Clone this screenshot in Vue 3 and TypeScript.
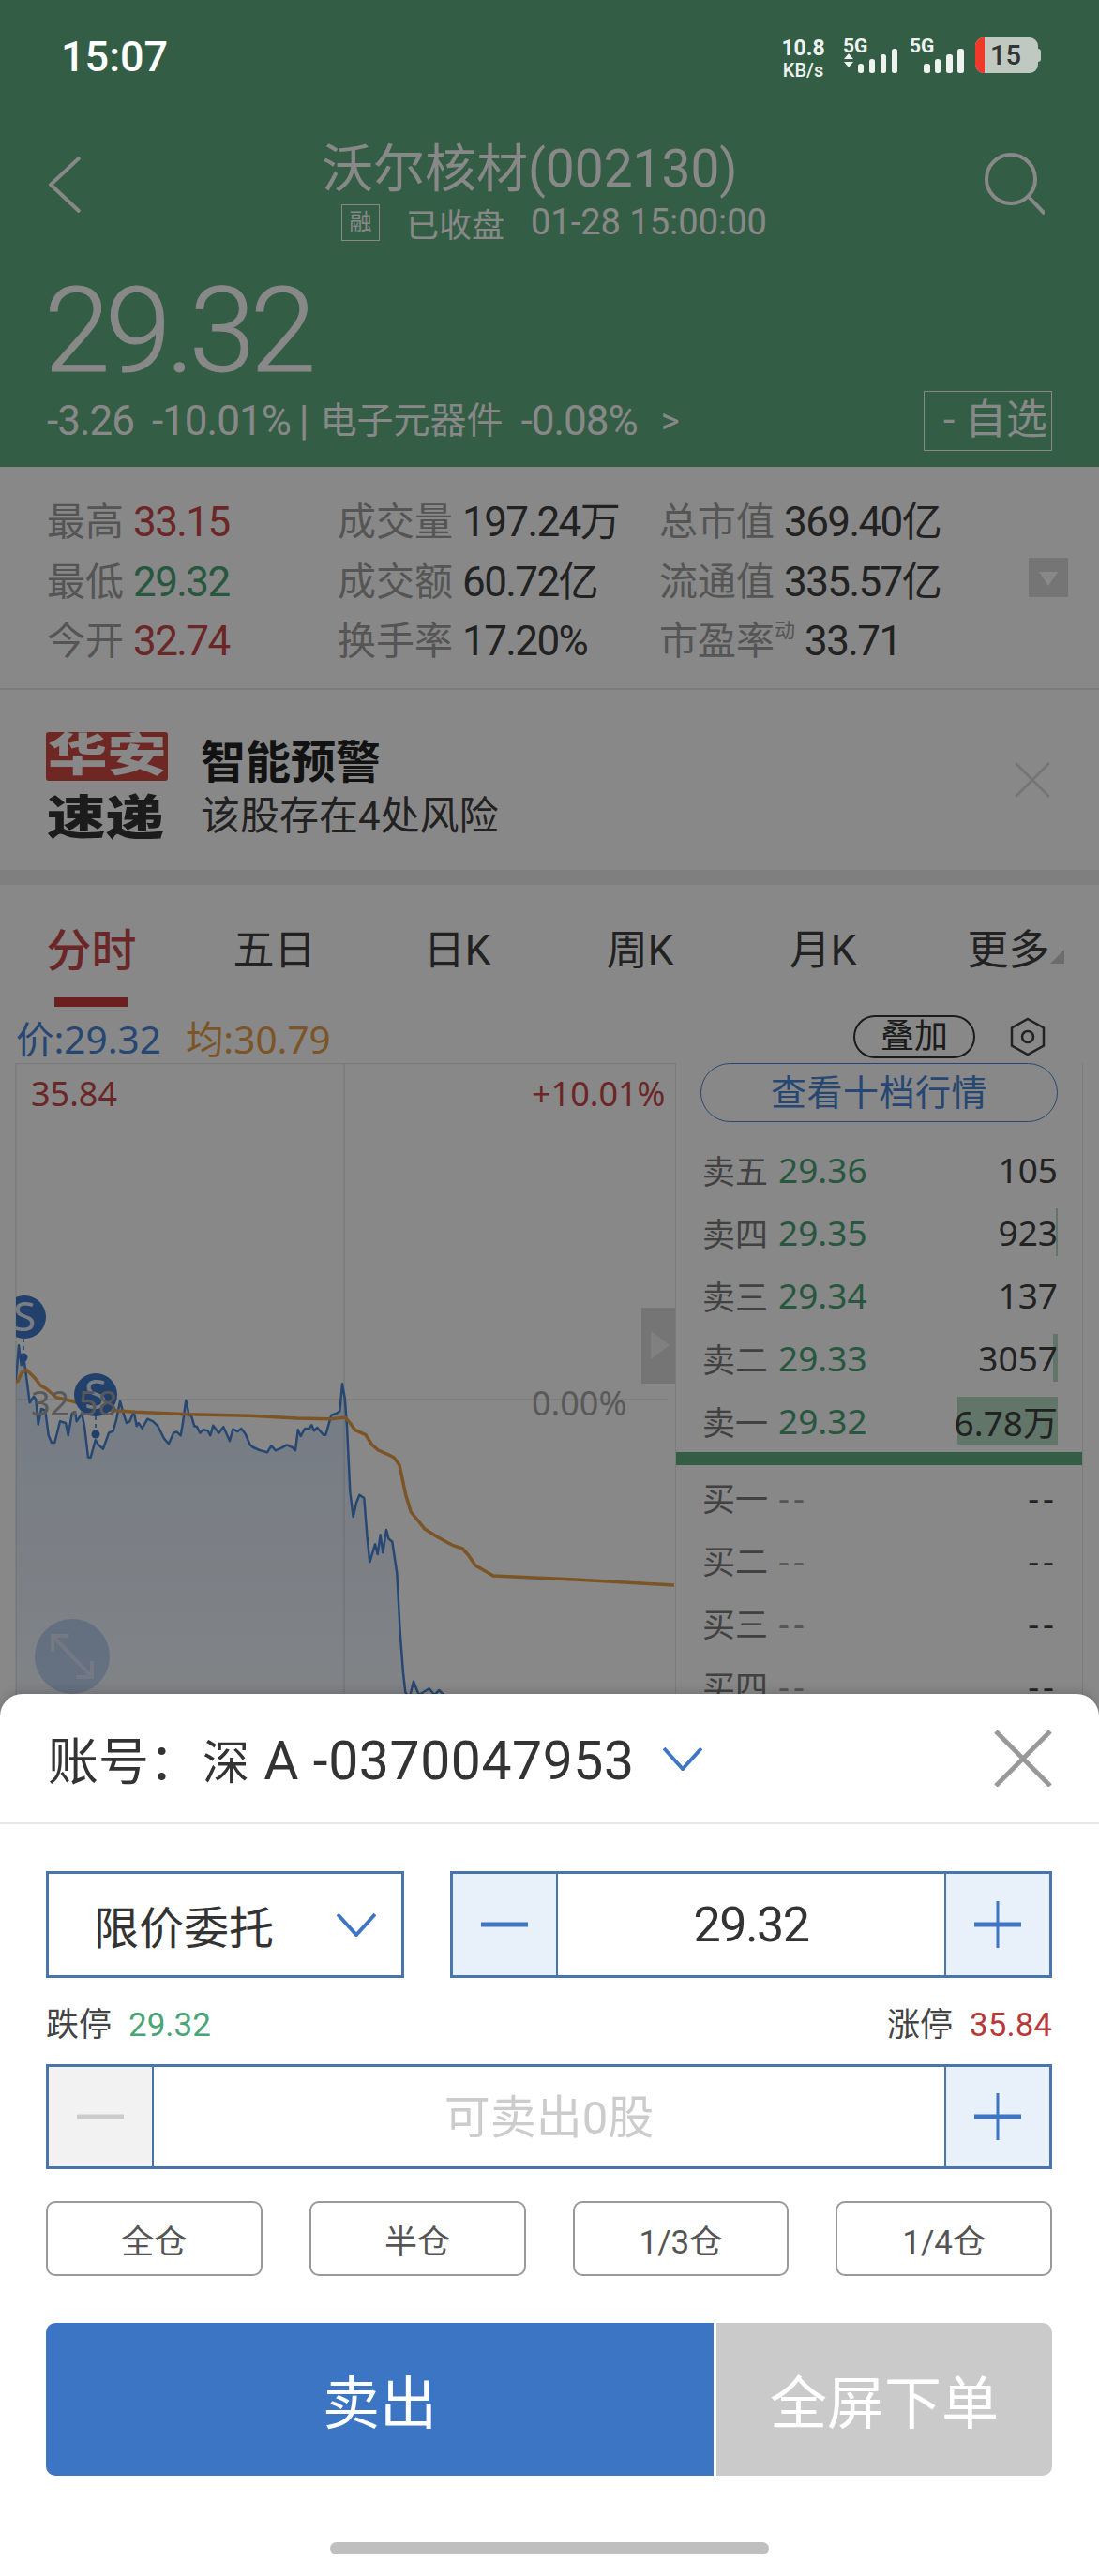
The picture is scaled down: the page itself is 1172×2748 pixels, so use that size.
<script setup lang="ts">
type Pt = [number, number]

// 行情摘要
const quotes = [
  [
    { label: '最高', value: '33.15', tone: 'up' },
    { label: '成交量', value: '197.24', unit: '万', tone: '' },
    { label: '总市值', value: '369.40', unit: '亿', tone: '' }
  ],
  [
    { label: '最低', value: '29.32', tone: 'down' },
    { label: '成交额', value: '60.72', unit: '亿', tone: '' },
    { label: '流通值', value: '335.57', unit: '亿', tone: '' }
  ],
  [
    { label: '今开', value: '32.74', tone: 'up' },
    { label: '换手率', value: '17.20%', tone: '' },
    { label: '市盈率', sup: '动', value: '33.71', tone: '' }
  ]
].flat()

const tabs = ['分时', '五日', '日K', '周K', '月K', '更多']

const asks = [
  { label: '卖五', price: '29.36', qty: '105', depth: 0 },
  { label: '卖四', price: '29.35', qty: '923', depth: 2 },
  { label: '卖三', price: '29.34', qty: '137', depth: 0 },
  { label: '卖二', price: '29.33', qty: '3057', depth: 5 },
  { label: '卖一', price: '29.32', qty: '6.78万', depth: 107 }
]
const bids = ['买一', '买二', '买三', '买四']
const positions = ['全仓', '半仓', '1/3仓', '1/4仓']

// 走势点，按 3 倍放大后的坐标记录
const bluePts: Pt[] = [
  [50, 290], [60, 172], [68, 235], [76, 210], [84, 270], [95, 355], [108, 335], [115, 345], [122, 425], [132, 375],
  [145, 380], [155, 460], [165, 483], [175, 483], [192, 415], [210, 420], [218, 460], [230, 390], [240, 385], [245, 415],
  [262, 390], [270, 430], [282, 530], [290, 530], [305, 475], [315, 490], [330, 503], [348, 452], [362, 445], [372, 410],
  [384, 350], [395, 390], [405, 420], [415, 415], [428, 383], [437, 430], [443, 420], [455, 437], [472, 407], [490, 415],
  [505, 430], [525, 470], [540, 487], [555, 452], [565, 448], [578, 460], [585, 420], [595, 347], [605, 395], [612, 397],
  [622, 430], [630, 432], [640, 452], [650, 442], [665, 445], [673, 460], [682, 428], [700, 452], [715, 433], [725, 455],
  [735, 478], [745, 440], [760, 447], [772, 438], [785, 455], [800, 490], [810, 498], [830, 507], [855, 514], [868, 493],
  [882, 508], [900, 500], [918, 490], [935, 498], [945, 508], [953, 442], [962, 462], [975, 438], [990, 437], [997, 427],
  [1005, 445], [1015, 435], [1035, 458], [1042, 458], [1060, 395], [1075, 390], [1087, 383], [1095, 295], [1103, 340], [1110, 430],
  [1120, 640], [1130, 720], [1140, 675], [1150, 650], [1165, 660], [1175, 790], [1183, 865], [1200, 808], [1208, 840], [1217, 778],
  [1225, 835], [1236, 762], [1243, 790], [1255, 800], [1270, 900], [1280, 1090], [1290, 1220], [1297, 1282], [1310, 1300],
  [1323, 1247], [1340, 1290], [1373, 1270], [1390, 1290], [1405, 1275], [1420, 1290]
]
const avgPts: Pt[] = [
  [50, 290], [58, 285], [70, 258], [85, 250], [110, 275], [130, 300], [150, 312], [180, 338], [230, 350], [300, 375],
  [430, 385], [600, 392], [800, 397], [950, 405], [1060, 407], [1105, 402], [1120, 420], [1135, 442], [1170, 458], [1190, 490],
  [1210, 507], [1240, 520], [1260, 530], [1278, 555], [1298, 650], [1315, 705], [1360, 760], [1400, 785], [1450, 812], [1480, 822],
  [1500, 845], [1521, 876], [1578, 909], [1839, 921], [2157, 939]
]

const toPath = (pts: Pt[]) =>
  pts.map(([x, y], i) => `${i ? 'L' : 'M'}${(x / 3).toFixed(1)} ${(1380 + y / 3 - 1136).toFixed(1)}`).join(' ')

const bluePath = toPath(bluePts)
const avgPath = toPath(avgPts)
const areaPath = `${bluePath} L473 700 L17 700 Z`
</script>

<template>
  <div class="page">
    <header class="header">
      <div class="status">
        <span class="time">15:07</span>
        <div class="status-right">
          <div class="speed"><b>10.8</b><span>KB/s</span></div>
          <div class="sim">
            <span class="g">5G</span>
            <svg width="58" height="26" viewBox="0 0 58 26">
              <path d="M1 11 6 5 11 11ZM1 14 6 20 11 14Z" fill="#eef3ef" />
              <rect x="16" y="16" width="6" height="10" rx="2.5" fill="#eef3ef" />
              <rect x="28" y="11" width="6" height="15" rx="2.5" fill="#eef3ef" />
              <rect x="40" y="6" width="6" height="20" rx="2.5" fill="#eef3ef" />
              <rect x="52" y="0" width="6" height="26" rx="2.5" fill="#eef3ef" />
            </svg>
          </div>
          <div class="sim second">
            <span class="g">5G</span>
            <svg width="43" height="26" viewBox="0 0 43 26">
              <rect x="0" y="16" width="7" height="10" rx="2.5" fill="#eef3ef" />
              <rect x="12" y="11" width="6" height="15" rx="2.5" fill="#eef3ef" />
              <rect x="24" y="6" width="7" height="20" rx="2.5" fill="#eef3ef" />
              <rect x="36" y="0" width="7" height="26" rx="2.5" fill="#eef3ef" />
            </svg>
          </div>
          <div class="battery"><i></i><span>15</span></div>
        </div>
      </div>

      <div class="nav">
        <svg class="back" width="34" height="60" viewBox="0 0 34 60">
          <path d="M33 1 2 30 33 59" fill="none" stroke="#fff" stroke-width="4" />
        </svg>
        <div class="nav-title">
          <div class="title">沃尔核材(002130)</div>
          <div class="sub">
            <span class="rong">融</span>
            <span class="closed">已收盘</span>
            <span>01-28 15:00:00</span>
          </div>
        </div>
        <svg class="search" width="64" height="66" viewBox="0 0 64 66">
          <circle cx="28" cy="28" r="26" fill="none" stroke="#fff" stroke-width="4" />
          <path d="M47 47 64 65" stroke="#fff" stroke-width="4" />
        </svg>
      </div>

      <div class="price">29.32</div>
      <div class="change">
        <div class="change-text">
          <span class="num">-3.26</span>
          <span class="num">-10.01%</span>
          <span class="bar">|</span>
          <span class="sector">电子元器件</span>
          <span class="num">-0.08%</span>
          <span class="gt">&gt;</span>
        </div>
        <div class="fav">- 自选</div>
      </div>
    </header>

    <section class="quote">
      <div class="quote-grid">
        <div v-for="q in quotes" :key="q.label" class="quote-item">
          <span class="q-label">{{ q.label }}<sup v-if="q.sup">{{ q.sup }}</sup></span>
          <span class="q-value" :class="q.tone">{{ q.value }}<small v-if="q.unit">{{ q.unit }}</small></span>
        </div>
      </div>
      <div class="expand"></div>
    </section>

    <section class="alert">
      <div class="logo">
        <div class="logo-top"><span>华安</span></div>
        <div class="logo-bottom"><span>速递</span></div>
      </div>
      <div class="alert-text">
        <div class="alert-title">智能预警</div>
        <div class="alert-desc">该股存在4处风险</div>
      </div>
      <svg class="alert-close" width="38" height="38" viewBox="0 0 38 38">
        <path d="M1 1 37 37M37 1 1 37" stroke="#dcdcdc" stroke-width="2.5" />
      </svg>
    </section>

    <nav class="tabs">
      <div v-for="(t, i) in tabs" :key="t" class="tab" :class="{ active: i === 0, more: i === 5 }">{{ t }}</div>
    </nav>

    <div class="legend">
      <span class="l-price">价:29.32</span>
      <span class="l-avg">均:30.79</span>
      <span class="overlay-btn">叠加</span>
      <svg class="hex" width="38" height="42" viewBox="0 0 38 42">
        <path d="M19 2 36 11.500V30.500L19 40 2 30.500V11.500Z" fill="none" stroke="#404040" stroke-width="2.500" />
        <circle cx="19" cy="21" r="6" fill="none" stroke="#404040" stroke-width="2.500" />
      </svg>
    </div>

    <section class="market">
      <div class="chart">
        <svg class="chart-svg" width="720" height="700" viewBox="0 0 720 700">
          <defs>
            <linearGradient id="area" x1="0" y1="0" x2="0" y2="1">
              <stop offset="0" stop-color="#4a86d8" stop-opacity=".2" />
              <stop offset="1" stop-color="#4a86d8" stop-opacity=".07" />
            </linearGradient>
            <clipPath id="plot"><rect x="17" y="0" width="703" height="700" /></clipPath>
          </defs>
          <path d="M17 0V700M367 0V700M17 .5H720M17 359H712" stroke="#e6e6e6" stroke-width="1.500" fill="none" />
          <g clip-path="url(#plot)">
            <path :d="areaPath" fill="url(#area)" />
            <path :d="bluePath" fill="none" stroke="#4a86d8" stroke-width="2.500" stroke-linejoin="round" />
            <path :d="avgPath" fill="none" stroke="#e8a04a" stroke-width="3.500" stroke-linejoin="round" />
            <circle cx="26" cy="271" r="23" fill="#3f78c8" />
            <text x="26" y="286" class="s-mark">S</text>
            <path d="M25 294V310M102 377V392" stroke="#3f78c8" stroke-width="1.500" stroke-dasharray="4 4" />
            <circle cx="25" cy="314" r="4.500" fill="#3f78c8" />
            <circle cx="102" cy="354" r="23" fill="#3f78c8" />
            <text x="102" y="369" class="s-mark">S</text>
            <circle cx="102" cy="396" r="4.500" fill="#3f78c8" />
          </g>
          <circle cx="77" cy="633" r="40" fill="#4a86d8" fill-opacity=".3" />
          <path d="M56 628V611H73M56 611 98 655M98 638V655H81" fill="none" stroke="#fff" stroke-opacity=".4" stroke-width="4" />
        </svg>
        <span class="axis up axis-tl">35.84</span>
        <span class="axis up axis-tr">+10.01%</span>
        <span class="axis mid axis-ml">32.58</span>
        <span class="axis mid axis-mr">0.00%</span>
        <div class="handle"><i></i></div>
      </div>

      <div class="book">
        <div class="ten">查看十档行情</div>
        <div v-for="a in asks" :key="a.label" class="row">
          <span class="r-label">{{ a.label }}</span>
          <span class="r-price">{{ a.price }}</span>
          <span class="r-qty">
            <i v-if="a.depth" class="depth" :style="{ width: a.depth + 'px' }"></i>
            <em>{{ a.qty }}</em>
          </span>
        </div>
        <div class="book-split"></div>
        <div v-for="b in bids" :key="b" class="row">
          <span class="r-label">{{ b }}</span>
          <span class="r-price none">--</span>
          <span class="r-qty none"><em>--</em></span>
        </div>
      </div>
    </section>

    <div class="dim"></div>

    <section class="sheet">
      <div class="account">
        <span class="acc-label">账号：</span>
        <span class="acc-value"><span class="shen">深</span> A -0370047953</span>
        <svg class="acc-chev" width="42" height="26" viewBox="0 0 42 26">
          <path d="M1 2 21 24 41 2" fill="none" stroke="#3f76c4" stroke-width="4" />
        </svg>
        <svg class="acc-close" width="62" height="60" viewBox="0 0 62 60">
          <path d="M2 1 60 59M60 1 2 59" stroke="#999" stroke-width="5" />
        </svg>
      </div>

      <div class="form">
        <div class="form-row">
          <div class="select">
            <span>限价委托</span>
            <svg width="42" height="26" viewBox="0 0 42 26">
              <path d="M1 2 21 24 41 2" fill="none" stroke="#3f76c4" stroke-width="4" />
            </svg>
          </div>
          <div class="stepper price-step">
            <div class="step">
              <svg width="50" height="50" viewBox="0 0 50 50"><path d="M0 25H50" stroke="#3f76c4" stroke-width="5" /></svg>
            </div>
            <div class="step-value price-value">29.32</div>
            <div class="step">
              <svg width="50" height="50" viewBox="0 0 50 50"><path d="M0 25H50" stroke="#3f76c4" stroke-width="5" /><path d="M25 0V50" stroke="#3f76c4" stroke-width="3" /></svg>
            </div>
          </div>
        </div>

        <div class="limits">
          <span>跌停<b class="l-down">29.32</b></span>
          <span>涨停<b class="l-up">35.84</b></span>
        </div>

        <div class="stepper">
          <div class="step off">
            <svg width="50" height="50" viewBox="0 0 50 50"><path d="M0 25H50" stroke="#ccc" stroke-width="5" /></svg>
          </div>
          <div class="step-value placeholder">可卖出0股</div>
          <div class="step">
            <svg width="50" height="50" viewBox="0 0 50 50"><path d="M0 25H50" stroke="#3f76c4" stroke-width="5" /><path d="M25 0V50" stroke="#3f76c4" stroke-width="3" /></svg>
          </div>
        </div>

        <div class="positions">
          <button v-for="p in positions" :key="p" class="pos">{{ p }}</button>
        </div>

        <div class="actions">
          <button class="sell">卖出</button>
          <button class="full">全屏下单</button>
        </div>
      </div>

      <div class="home"></div>
    </section>
  </div>
</template>

<style>
html,
body {
  margin: 0;
  background: #fff;
}
</style>

<style scoped>
.page {
  position: relative;
  width: 1172px;
  height: 2748px;
  overflow: hidden;
  background: #fff;
  color: #404040;
  font-family: Roboto, "Noto Sans CJK SC", sans-serif;
}

.dim {
  position: absolute;
  inset: 0;
  z-index: 1;
  background: rgba(0, 0, 0, 0.467);
}

/* header */
.header {
  height: 498px;
  background: #60b081;
  color: #fff;
}
.status {
  position: relative;
  z-index: 2;
  height: 122px;
  display: flex;
  justify-content: space-between;
  padding: 0 65px;
  box-sizing: border-box;
}
.time {
  font-size: 45px;
  font-weight: 500;
  line-height: 122px;
  color: #fff;
}
.status-right {
  display: flex;
  align-items: flex-start;
  padding-top: 40px;
  color: #eef3ef;
}
.speed {
  width: 45px;
  display: flex;
  flex-direction: column;
  align-items: center;
  line-height: 1;
}
.speed b {
  font-size: 23px;
  font-weight: 700;
  height: 25px;
}
.speed span {
  font-size: 20px;
  font-weight: 500;
}
.sim {
  position: relative;
  margin-left: 20px;
  width: 58px;
  height: 38px;
}
.sim .g {
  position: absolute;
  left: 0;
  top: -1px;
  font-size: 21px;
  font-weight: 700;
  line-height: 20px;
}
.sim svg {
  position: absolute;
  left: 0;
  bottom: 0;
}
.sim.second {
  margin-left: 13px;
}
.sim.second svg {
  left: 15px;
}
.battery {
  position: relative;
  margin-left: 12px;
  width: 67px;
  height: 38px;
  border-radius: 9px;
  background: #bfc9c2;
  display: flex;
  align-items: center;
}
.battery::after {
  content: "";
  position: absolute;
  right: -3px;
  top: 12px;
  width: 3px;
  height: 14px;
  border-radius: 0 3px 3px 0;
  background: #bfc9c2;
}
.battery i {
  width: 10px;
  height: 100%;
  border-radius: 9px 0 0 9px;
  background: #f0392b;
}
.battery span {
  margin-left: 6px;
  font-size: 29px;
  font-weight: 500;
  color: #333;
}

.nav {
  display: flex;
  align-items: flex-start;
  height: 156px;
  padding: 25px 58px 0 52px;
  box-sizing: border-box;
}
.back {
  margin-top: 20px;
  flex: none;
}
.search {
  margin-top: 16px;
  flex: none;
}
.nav-title {
  flex: 1;
}
.title {
  margin-left: 257px;
  font-size: 55px;
  line-height: 66px;
  white-space: nowrap;
}
.sub {
  margin-left: 278px;
  height: 48px;
  display: flex;
  align-items: center;
  font-size: 38px;
  white-space: nowrap;
}
.rong {
  width: 41px;
  height: 39px;
  box-sizing: border-box;
  border: 1px solid #fff;
  font-size: 24px;
  line-height: 37px;
  text-align: center;
  margin-right: 28px;
}
.closed {
  margin-right: 28px;
  font-size: 35px;
}

.price {
  margin-top: 10px;
  padding-left: 47px;
  height: 129px;
  font-size: 127px;
  font-weight: 300;
  line-height: 129px;
  letter-spacing: -5.5px;
  -webkit-text-stroke: 1px #fff;
}
.change {
  display: flex;
  align-items: center;
  justify-content: space-between;
  padding: 0 50px;
  height: 64px;
}
.change-text {
  display: flex;
  align-items: center;
  height: 64px;
  line-height: 64px;
  font-size: 39px;
  white-space: nowrap;
}
.change-text .num {
  font-size: 44px;
  letter-spacing: -1px;
  margin-right: 19px;
}
.change-text .bar {
  margin: 0 12px 0 -10px;
  font-size: 44px;
}
.change-text .sector {
  margin-right: 19px;
}
.change-text .gt {
  margin-left: 6px;
  font-size: 38px;
}
.fav {
  width: 137px;
  height: 64px;
  box-sizing: border-box;
  border: 1px solid #fff;
  font-size: 44px;
  line-height: 60px;
  text-align: right;
  padding-right: 4px;
  white-space: nowrap;
}

/* quote */
.quote {
  display: flex;
  height: 238px;
  box-sizing: border-box;
  border-bottom: 2px solid #e6e6e6;
}
.quote-grid {
  display: grid;
  grid-template-columns: 310px 343px 394px;
  grid-auto-rows: 63.500px;
  width: 1047px;
  padding: 28px 0 0 50px;
  flex: none;
  margin-right: -50px;
}
.quote-item {
  display: flex;
  align-items: center;
  gap: 10px;
  height: 63.500px;
  line-height: 63px;
  font-size: 41px;
  white-space: nowrap;
}
.q-label {
  color: #a0a0a0;
}
.q-label sup {
  font-size: 22px;
  line-height: 0;
  vertical-align: 18px;
}
.q-value {
  font-size: 44px;
  letter-spacing: -1.6px;
}
.q-value small {
  font-size: 43px;
  letter-spacing: 0;
}
.q-value.up {
  color: #c94a4a;
}
.q-value.down {
  color: #4aa477;
}
.expand {
  position: relative;
  flex: none;
  width: 42px;
  height: 42px;
  margin-top: 97px;
  background: #dcdcdc;
  margin-left: 50px;
}
.expand::after {
  content: "";
  position: absolute;
  left: 11px;
  top: 15px;
  border-left: 10px solid transparent;
  border-right: 10px solid transparent;
  border-top: 15px solid #fff;
}

/* alert */
.alert {
  height: 192px;
  display: flex;
  align-items: flex-start;
  padding: 45px 52px 0 49px;
  box-sizing: border-box;
}
.logo {
  width: 130px;
  flex: none;
}
.logo-top {
  height: 52px;
  background: #d04a45;
  border-radius: 3px;
  color: #fff;
  font-size: 48px;
  font-weight: 900;
  line-height: 50px;
  white-space: nowrap;
}
.logo-top span,
.logo-bottom span {
  display: inline-block;
  transform-origin: left center;
  transform: scaleX(1.32);
  margin-left: 2px;
}
.logo-bottom {
  margin-top: 15px;
  font-size: 50px;
  font-weight: 900;
  line-height: 50px;
  color: #333;
  white-space: nowrap;
}
.logo-bottom span {
  transform: scaleX(1.25);
  margin-left: 1px;
}
.alert-text {
  margin-left: 35px;
  flex: 1;
}
.alert-title {
  margin-top: 5px;
  font-size: 48px;
  font-weight: 700;
  line-height: 56px;
  color: #222;
}
.alert-desc {
  margin-top: 1px;
  font-size: 42px;
  line-height: 56px;
}
.alert-close {
  margin-top: 32px;
  flex: none;
}

/* tabs */
.tabs {
  display: grid;
  grid-template-columns: repeat(6, 195px);
  height: 134px;
  border-top: 16px solid #eee;
}
.tab {
  position: relative;
  display: flex;
  align-items: center;
  justify-content: center;
  padding-bottom: 2px;
  box-sizing: border-box;
  font-size: 44px;
}
.tab.active {
  color: #c94a4a;
  font-size: 48px;
  font-weight: 500;
}
.tab.active::after {
  content: "";
  position: absolute;
  left: 58px;
  bottom: 4px;
  width: 78px;
  height: 10px;
  background: #c93a3a;
}
.tab.more {
  padding-left: 6px;
}
.tab.more::after {
  content: "";
  position: absolute;
  right: 35px;
  top: 69px;
  border-style: solid;
  border-width: 0 0 15px 15px;
  border-color: transparent transparent #c8c8c8;
}

/* legend */
.legend {
  height: 56px;
  display: flex;
  align-items: center;
  padding-left: 17px;
  font-family: "Noto Sans", "Noto Sans CJK SC", sans-serif;
  font-size: 40.500px;
}
.l-price {
  color: #4a86d8;
}
.l-avg {
  margin-left: 26px;
  color: #e8a04a;
}
.overlay-btn {
  margin-left: auto;
  width: 130px;
  height: 46px;
  box-sizing: border-box;
  border: 2px solid #333;
  border-radius: 23px;
  font-size: 36px;
  line-height: 40px;
  text-align: center;
  color: #333;
}
.hex {
  margin: 0 57px 0 37px;
}

/* market */
.market {
  display: flex;
  height: 700px;
}
.chart {
  position: relative;
  width: 720px;
  flex: none;
  font-family: "Noto Sans", sans-serif;
}
.chart-svg {
  position: absolute;
  left: 0;
  top: 0;
}
.s-mark {
  fill: #fff;
  font-size: 44px;
  text-anchor: middle;
  opacity: .85;
  font-family: "Noto Sans", sans-serif;
}
.axis {
  position: absolute;
  font-size: 36px;
  line-height: 48px;
  white-space: nowrap;
}
.axis.up {
  color: #c94a4a;
}
.axis.mid {
  color: #a8a8a8;
}
.axis-tl {
  left: 33px;
  top: 9px;
}
.axis-tr {
  left: 567px;
  top: 9px;
}
.axis-ml {
  left: 33px;
  top: 339px;
}
.axis-mr {
  left: 567px;
  top: 339px;
}
.handle {
  position: absolute;
  left: 684px;
  top: 261px;
  width: 36px;
  height: 81px;
  background: #dcdcdc;
}
.handle i {
  position: absolute;
  left: 10px;
  top: 25px;
  border-top: 15px solid transparent;
  border-bottom: 15px solid transparent;
  border-left: 20px solid #f0f0f0;
}

/* order book */
.book {
  width: 435px;
  flex: none;
  box-sizing: border-box;
  border-left: 1.500px solid #e6e6e6;
  border-right: 1.500px solid #e6e6e6;
  font-family: "Noto Sans", "Noto Sans CJK SC", sans-serif;
}
.ten {
  margin: 0 26px 17px 26px;
  height: 63px;
  box-sizing: border-box;
  border: 1.500px solid #4a86d8;
  border-radius: 32px;
  color: #4a86d8;
  font-size: 38px;
  line-height: 58px;
  text-align: center;
  letter-spacing: 0.500px;
}
.row {
  position: relative;
  height: 67px;
  display: flex;
  align-items: center;
  padding: 0 26px 0 28px;
  font-size: 37px;
  white-space: nowrap;
}
.r-label {
  width: 81px;
  color: #7a7a7a;
  font-size: 35px;
}
.r-price {
  color: #4aa477;
}
.r-price.none {
  color: #a0a0a0;
  letter-spacing: 4px;
}
.r-qty {
  margin-left: auto;
}
.r-qty.none em {
  letter-spacing: 4px;
}
.r-qty em {
  position: relative;
  font-style: normal;
}
.depth {
  position: absolute;
  right: 26px;
  top: 8px;
  height: 51px;
  background: #60b081;
  opacity: .45;
}
.book-split {
  height: 14px;
  background: #60b081;
}

/* bottom sheet */
.sheet {
  position: absolute;
  z-index: 2;
  left: 0;
  right: 0;
  top: 1807px;
  bottom: 0;
  background: #fff;
  border-radius: 24px 24px 0 0;
  box-shadow: 0 -4px 10px rgba(0, 0, 0, .12);
}
.account {
  height: 139px;
  box-sizing: border-box;
  border-bottom: 2px solid #e8e8e8;
  display: flex;
  align-items: center;
  padding: 0 50px 0 51px;
  font-size: 54px;
  color: #333;
  white-space: nowrap;
}
.acc-value {
  margin-left: 3px;
  font-size: 57px;
  letter-spacing: .6px;
}
.shen {
  font-size: 50px;
}
.acc-chev {
  margin-left: 30px;
}
.acc-close {
  margin-left: auto;
}
.form {
  padding: 50px 50px 0 49px;
}
.form-row {
  display: flex;
  gap: 49px;
  height: 114px;
}
.select {
  width: 382px;
  box-sizing: border-box;
  border: 3px solid #4a75ab;
  display: flex;
  align-items: center;
  justify-content: space-between;
  padding: 0 27px 0 48px;
  font-size: 48px;
  color: #333;
}
.stepper {
  display: flex;
  height: 112px;
  box-sizing: border-box;
  border: 3px solid #4a75ab;
}
.price-step {
  flex: 1;
  height: 114px;
}
.step {
  flex: none;
  width: 110px;
  display: flex;
  align-items: center;
  justify-content: center;
  background: #e8f0f9;
}
.step.off {
  background: #f2f2f2;
}
.step-value {
  flex: 1;
  border-left: 2px solid #4a75ab;
  border-right: 2px solid #4a75ab;
  text-align: center;
  font-size: 49px;
  line-height: 110px;
  color: #333;
  overflow: hidden;
}
.step-value.price-value {
  font-size: 52px;
  letter-spacing: -1.5px;
}
.step-value.placeholder {
  color: #ccc;
}
.limits {
  height: 92px;
  display: flex;
  align-items: center;
  justify-content: space-between;
  font-size: 35px;
  color: #444;
}
.limits b {
  margin-left: 18px;
  font-weight: 400;
}
.l-down {
  color: #4aa477;
}
.l-up {
  color: #b73a3a;
}
.positions {
  margin-top: 34px;
  display: grid;
  grid-template-columns: repeat(4, 1fr);
  gap: 50px;
  height: 80px;
}
.pos {
  border: 2px solid #999;
  border-radius: 10px;
  background: #fff;
  color: #555;
  font-family: inherit;
  font-size: 35px;
  padding: 0;
}
.actions {
  margin-top: 50px;
  display: flex;
  height: 163px;
}
.actions button {
  border: 0;
  padding: 0;
  color: #fff;
  font-family: inherit;
  font-size: 61px;
}
.sell {
  width: 712px;
  background: #3d75c5;
  border-radius: 10px 0 0 10px;
}
.full {
  margin-left: 3px;
  flex: 1;
  background: #cacaca;
  border-radius: 0 10px 10px 0;
}
.home {
  margin: 71px auto 0;
  width: 468px;
  height: 13px;
  border-radius: 7px;
  background: #bfbfbf;
}
</style>
